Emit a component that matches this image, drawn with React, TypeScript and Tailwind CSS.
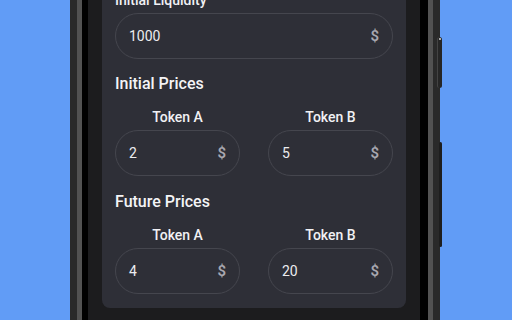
const font = { fontFamily: 'Roboto, "Noto Sans", sans-serif' }

function PriceInput({ value }: { value: string }) {
  return (
    <div className="flex h-[46px] items-center justify-between rounded-full border border-[#45464e] pl-[13px] pr-[13px]">
      <span className="text-sm text-[#ececef]">{value}</span>
      <span className="text-[15px] font-semibold text-[#a8a8b0]">$</span>
    </div>
  )
}

function TokenField({ label, value }: { label: string; value: string }) {
  return (
    <div className="flex flex-col">
      <div className="h-5 text-center text-sm font-medium leading-5 text-[#f1f1f4]">{label}</div>
      <div className="mt-[3px]">
        <PriceInput value={value} />
      </div>
    </div>
  )
}

export default function App() {
  return (
    <div className="relative h-[320px] w-[512px] overflow-hidden bg-[#619cf6]" style={font}>
      <div className="relative ml-[70px] -mt-[37px] w-[370px]">
        {/* frame layers */}
        <div className="bg-[#2a2a2a] px-[7px]">
          <div className="bg-[#525252] px-[5px]">
            <div className="bg-black pl-[6px] pr-[8px]">
              <div className="h-[400px] bg-[#1c1c1e] px-[14px] pt-[14px]">
                <div className="rounded-b-lg bg-[#2e2f37] px-[13px] pt-[13px] pb-[14px]">
                  <div className="h-5 text-sm font-medium leading-5 text-[#f1f1f4]">Initial Liquidity</div>
                  <div className="mt-[3px]">
                    <PriceInput value="1000" />
                  </div>

                  <div className="mt-[13px] h-6 text-base font-medium leading-6 text-[#f4f4f6]">Initial Prices</div>
                  <div className="mt-[11px] grid grid-cols-2 gap-[28px]">
                    <TokenField label="Token A" value="2" />
                    <TokenField label="Token B" value="5" />
                  </div>

                  <div className="mt-[14px] h-6 text-base font-medium leading-6 text-[#f4f4f6]">Future Prices</div>
                  <div className="mt-[11px] grid grid-cols-2 gap-[28px]">
                    <TokenField label="Token A" value="4" />
                    <TokenField label="Token B" value="20" />
                  </div>
                </div>
              </div>
            </div>
          </div>
        </div>

        {/* side buttons */}
        <div className="absolute left-[367px] top-[74px] h-[51px] w-[5px] rounded-sm bg-[#262626] border-l border-[#444]">
          <div className="ml-[1px] mt-[1px] h-[2px] w-[2px] rounded-full bg-[#d8d8d8]" />
        </div>
        <div className="absolute left-[369px] top-[179px] h-[105px] w-[3px] rounded-sm bg-[#1e1e1e]" />
      </div>
    </div>
  )
}
